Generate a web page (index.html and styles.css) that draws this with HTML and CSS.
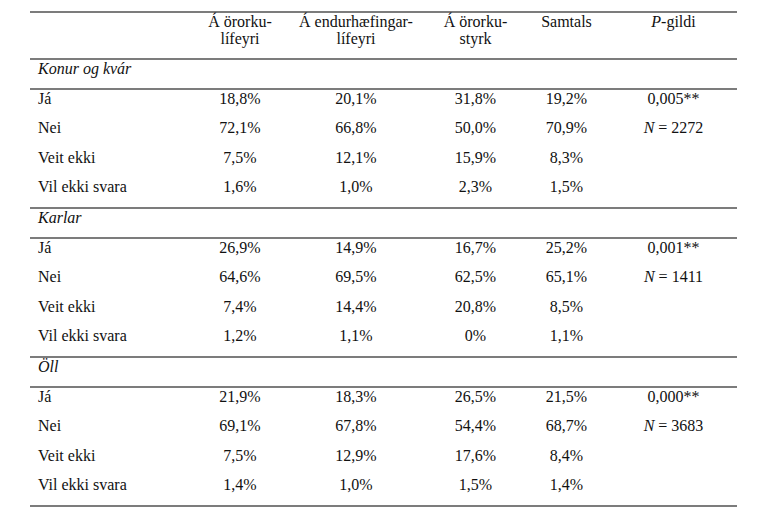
FILE: index.html
```html
<!DOCTYPE html>
<html lang="is">
<head>
<meta charset="utf-8">
<title>Tafla</title>
<link rel="stylesheet" href="styles.css">
</head>
<body>
<div class="page">
<table class="stats">
  <colgroup>
    <col class="c-label">
    <col class="c-1">
    <col class="c-2">
    <col class="c-3">
    <col class="c-4">
    <col class="c-5">
  </colgroup>
  <thead>
    <tr class="head">
      <th></th>
      <th>Á örorku-<br>lífeyri</th>
      <th>Á endurhæfingar-<br>lífeyri</th>
      <th>Á örorku-<br>styrk</th>
      <th>Samtals</th>
      <th><i>P</i>-gildi</th>
    </tr>
  </thead>
  <tbody>
    <tr class="group"><td colspan="6">Konur og kvár</td></tr>
    <tr><td>Já</td><td>18,8%</td><td>20,1%</td><td>31,8%</td><td>19,2%</td><td>0,005**</td></tr>
    <tr><td>Nei</td><td>72,1%</td><td>66,8%</td><td>50,0%</td><td>70,9%</td><td><i>N</i> = 2272</td></tr>
    <tr><td>Veit ekki</td><td>7,5%</td><td>12,1%</td><td>15,9%</td><td>8,3%</td><td></td></tr>
    <tr><td>Vil ekki svara</td><td>1,6%</td><td>1,0%</td><td>2,3%</td><td>1,5%</td><td></td></tr>

    <tr class="group"><td colspan="6">Karlar</td></tr>
    <tr><td>Já</td><td>26,9%</td><td>14,9%</td><td>16,7%</td><td>25,2%</td><td>0,001**</td></tr>
    <tr><td>Nei</td><td>64,6%</td><td>69,5%</td><td>62,5%</td><td>65,1%</td><td><i>N</i> = 1411</td></tr>
    <tr><td>Veit ekki</td><td>7,4%</td><td>14,4%</td><td>20,8%</td><td>8,5%</td><td></td></tr>
    <tr><td>Vil ekki svara</td><td>1,2%</td><td>1,1%</td><td>0%</td><td>1,1%</td><td></td></tr>

    <tr class="group"><td colspan="6">Öll</td></tr>
    <tr><td>Já</td><td>21,9%</td><td>18,3%</td><td>26,5%</td><td>21,5%</td><td>0,000**</td></tr>
    <tr><td>Nei</td><td>69,1%</td><td>67,8%</td><td>54,4%</td><td>68,7%</td><td><i>N</i> = 3683</td></tr>
    <tr><td>Veit ekki</td><td>7,5%</td><td>12,9%</td><td>17,6%</td><td>8,4%</td><td></td></tr>
    <tr><td>Vil ekki svara</td><td>1,4%</td><td>1,0%</td><td>1,5%</td><td>1,4%</td><td></td></tr>
  </tbody>
</table>
</div>
</body>
</html>
```

FILE: styles.css
```css
html, body {
  margin: 0;
  padding: 0;
  background: #ffffff;
}

body {
  font-family: "Liberation Serif", "Times New Roman", serif;
  font-size: 16px;
  color: #111111;
}

.page {
  padding: 11px 0 0 30px;
}

.stats {
  width: 707px;
  border-collapse: collapse;
  table-layout: fixed;
  border-top: 2px solid #7c7c7c;
  border-bottom: 2px solid #7c7c7c;
}

.c-label { width: 166px; }
.c-1 { width: 88px; }
.c-2 { width: 144px; }
.c-3 { width: 95px; }
.c-4 { width: 87px; }
.c-5 { width: 127px; }

.stats th,
.stats td {
  padding: 0 0 12.25px 0;
  line-height: 17px;
  text-align: center;
  vertical-align: top;
  font-weight: normal;
  white-space: nowrap;
}

.stats td:first-child {
  text-align: left;
  padding-left: 8px;
}

.head th {
  padding-bottom: 11px;
}

.group td {
  font-style: italic;
  padding-bottom: 11px;
  border-top: 2px solid #7c7c7c;
  border-bottom: 2px solid #7c7c7c;
}
```
